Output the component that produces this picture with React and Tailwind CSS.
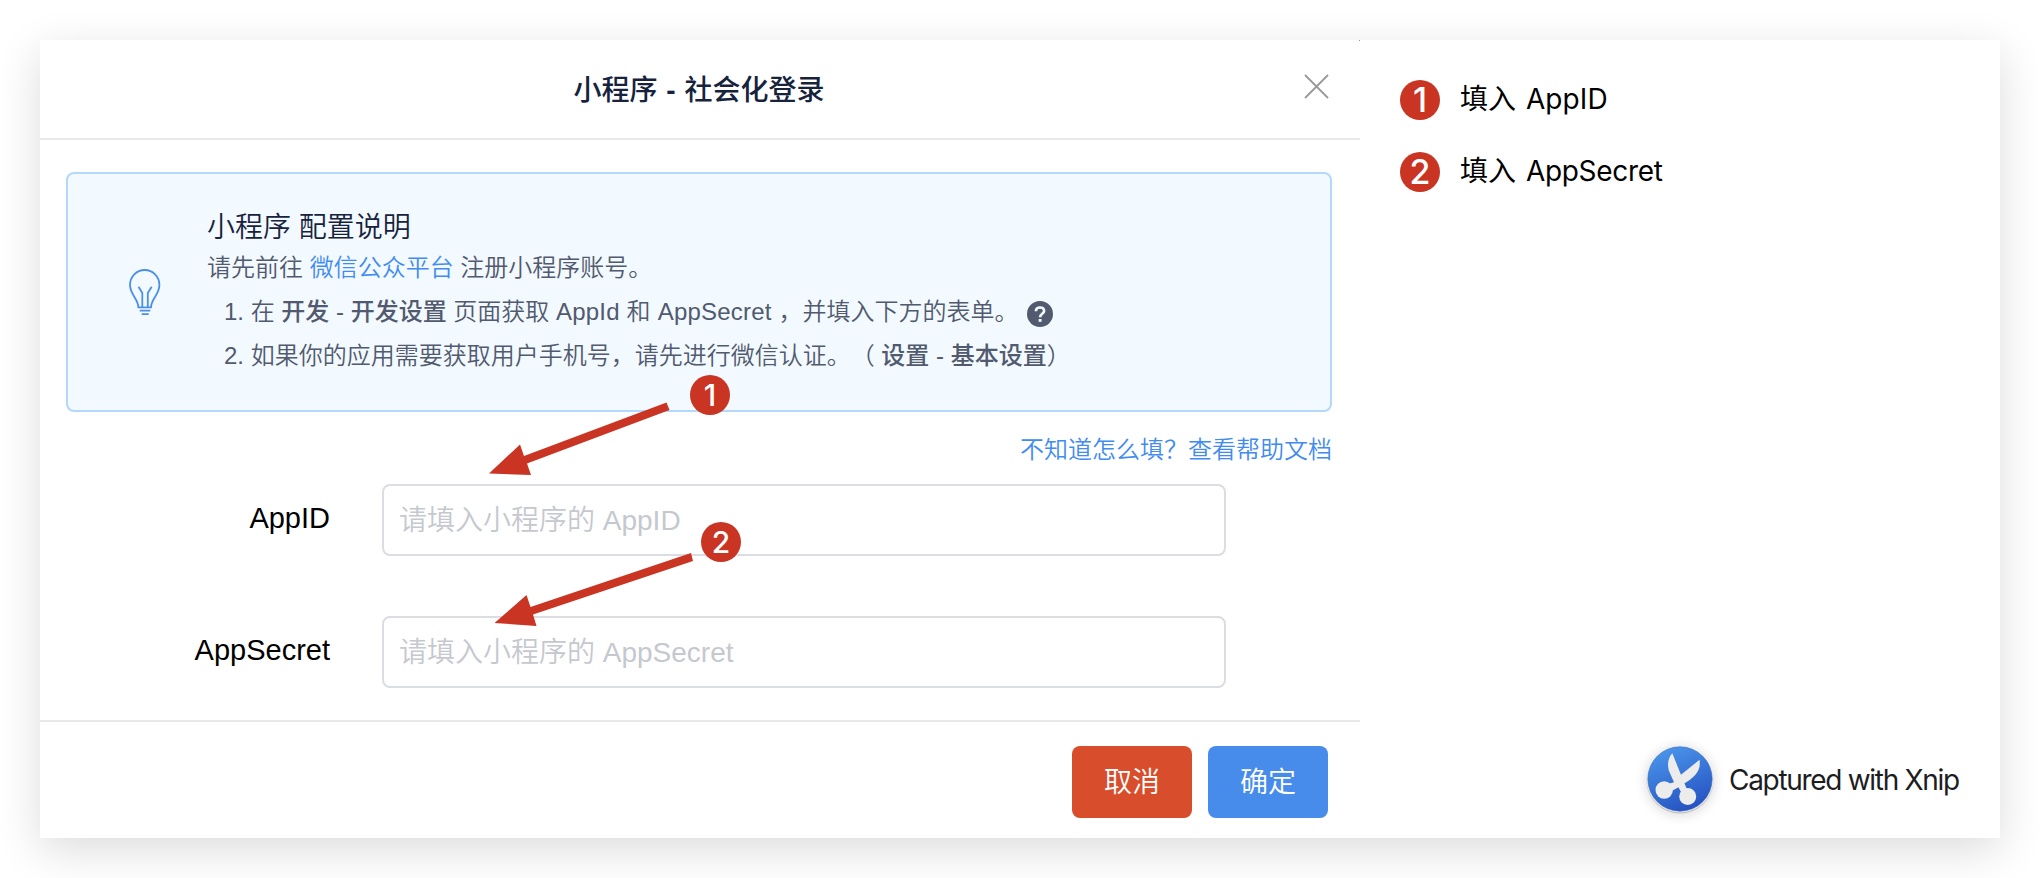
const BODY_FONT = "font-['Liberation_Sans','Noto_Sans_CJK_SC',sans-serif]";

function Badge({ n, className = "text-[30px]" }) {
  return (
    <span className={`flex size-10 shrink-0 items-center justify-center rounded-full bg-[#c93423] font-['Inter','Liberation_Sans',sans-serif] leading-none font-medium text-white ${className}`}>
      {n}
    </span>
  );
}

function Bulb() {
  return (
    <svg width="32" height="47" viewBox="0 0 32 47" fill="none" stroke="#4a90ea" strokeWidth="1.8">
      <path d="M9.400 38.300C9.400 30 1 25.500 1 16a14.700 15 0 0 1 29.400 0C30.400 25.500 22 30 22 38.300Z" />
      <path d="M9.500 17.700 13.300 24v14M22.700 17.700 18.800 24v14" />
      <path d="M10.700 41.600h10.600M12.700 45.200h7" />
    </svg>
  );
}

function Help() {
  return (
    <span className="mt-[3px] ml-[9px] flex size-[26px] items-center justify-center rounded-full bg-[#515a6e]">
      <svg width="26" height="26" viewBox="0 0 26 26" fill="none" stroke="#f2f9ff" strokeWidth="2.7">
        <path d="M8.900 10.200C9 7.600 10.800 6.500 13 6.500c2.500 0 4.100 1.400 4.100 3.400 0 2.900-4 2.900-4 6.300" />
        <path d="M13.100 18v2.800" strokeWidth="2.900" />
      </svg>
    </span>
  );
}

function Scissors() {
  return (
    <svg className="mt-px" width="90" height="90" viewBox="0 0 90 90">
      <defs>
        <linearGradient id="disc" x1="0.3" y1="0" x2="0.7" y2="1">
          <stop offset="0" stopColor="#4a95ea" />
          <stop offset="1" stopColor="#2450c0" />
        </linearGradient>
        <filter id="soft" x="-30%" y="-30%" width="160%" height="160%">
          <feGaussianBlur stdDeviation="6" />
        </filter>
      </defs>
      <circle cx="45" cy="47" r="35" fill="#000" opacity="0.13" filter="url(#soft)" />
      <circle cx="45" cy="46" r="33.6" fill="#c4c4c6" />
      <circle cx="45" cy="44.700" r="33.600" fill="#f1f1f2" />
      <circle cx="45" cy="45" r="32.200" fill="url(#disc)" stroke="#3d6db5" strokeWidth="0.6" />
      <g fill="#ececec">
        <path d="M37.300 19.300C33.500 23.500 32 29.500 33.800 36.500L39 48.300 33 50 37.500 56.500 43.500 53.300 46 58 52 55.500 49.500 49.300C58.500 44 66.500 37.500 64.500 25.800L46 40.800Z" />
        <circle cx="29.200" cy="56" r="8.700" />
        <circle cx="52.700" cy="62.400" r="8.500" />
      </g>
    </svg>
  );
}

function Field({ label, placeholder }) {
  return (
    <div className="flex h-[72px] items-center">
      <label className="w-[290px] pb-1 text-right text-[29px] leading-9 text-black">{label}</label>
      <div className="ml-[52px] flex h-[72px] w-[844px] items-center rounded-lg border-2 border-[#dcdde2] bg-white pt-0.5 pl-[15px] text-[28px] font-[350] text-[#c5c8ce]">
        {placeholder}
      </div>
    </div>
  );
}

export default function App() {
  return (
    <div className={`relative h-[878px] w-[2040px] overflow-hidden bg-white p-10 [text-spacing-trim:space-all] ${BODY_FONT}`}>
      <div className="flex h-[798px] w-[1960px] bg-white shadow-[0_12px_42px_rgba(0,0,0,0.14)]">
        <section className="flex w-[1320px] flex-col">
          <header className="flex h-[100px] shrink-0 items-center border-b-2 border-[#e8e8e8]">
            <h1 className="flex-1 pt-1 pr-0.5 text-center text-[28px] font-medium text-[#17233d]">
              小程序 <b className="mx-px font-bold">-</b> 社会化登录
            </h1>
            <svg className="absolute top-[74px] left-[1304px]" width="25" height="25" viewBox="0 0 25 25" stroke="#999" strokeWidth="1.8">
              <path d="M1 1 24 24M24 1 1 24" />
            </svg>
          </header>

          <main className="flex h-[580px] flex-col pt-8">
            <div className="mr-7 ml-[26px] flex h-[240px] rounded-lg border-2 border-[#b3d8fb] bg-[#f2f9ff]">
              <div className="flex w-[139px] items-center pl-[61px]">
                <Bulb />
              </div>
              <div className="pt-8 text-[24px] font-[350] text-[#515a6e]">
                <h2 className="text-[28px] leading-[44px] text-[#17233d]">小程序 配置说明</h2>
                <p className="-mt-0.5 mb-0.5 leading-[40px]">
                  请先前往 <a className="text-[#428bf0]">微信公众平台</a> 注册小程序账号。
                </p>
                <ol className="pl-[17px] leading-[44px]">
                  <li className="flex h-[44px] items-center whitespace-pre">
                    <span>1. 在 <b className="font-medium">开发</b> - <b className="font-medium">开发设置</b> 页面获取 <span className="tracking-[0.2px]">AppId 和 AppSecret </span>，并填入下方的表单。</span>
                    <Help />
                  </li>
                  <li className="h-[44px] whitespace-pre">
                    2. 如果你的应用需要获取用户手机号，请先进行微信认证。（ <b className="font-medium">设置</b> - <b className="font-medium">基本设置</b>）
                  </li>
                </ol>
              </div>
            </div>
            <a className="mt-5 mr-7 block text-right text-[24px] leading-9 font-[350] text-[#428bf0]">不知道怎么填？查看帮助文档</a>
            <div className="mt-4 flex flex-col gap-[60px]">
              <Field label="AppID" placeholder="请填入小程序的 AppID" />
              <Field label="AppSecret" placeholder="请填入小程序的 AppSecret" />
            </div>
          </main>

          <footer className="flex h-[118px] justify-end gap-4 border-t-2 border-[#e8e8e8] pt-6 pr-8 text-[28px] font-[350] text-white">
            <button className="h-[72px] w-[120px] rounded-lg bg-[#d84e2c] pt-0.5">取消</button>
            <button className="h-[72px] w-[120px] rounded-lg bg-[#488ceb] pt-0.5">确定</button>
          </footer>
        </section>

        <aside className="flex w-[640px] flex-col justify-between pt-10 pl-10 font-['Inter','Noto_Sans_CJK_SC',sans-serif]">
          <ol className="flex flex-col gap-8 text-[28px] leading-[38px] text-black">
            <li className="flex h-10 gap-5"><Badge n="1" className="text-[34px]" /><span>填入 <span className="ml-0.5 tracking-[0.1px]">AppID</span></span></li>
            <li className="flex h-10 gap-5"><Badge n="2" className="text-[34px]" /><span>填入 <span className="ml-0.5 tracking-[-0.3px]">AppSecret</span></span></li>
          </ol>
          <div className="mb-[14px] ml-[235px] flex items-center text-[28px] text-[#1d1d1f]">
            <Scissors />
            <span className="ml-1 pt-0.5 tracking-[-1.3px]">Captured with Xnip</span>
          </div>
        </aside>
      </div>

      <span className="absolute top-10 left-[1359px] size-px bg-[#999]" />
      <svg className="absolute top-0 left-0" width="800" height="700" viewBox="0 0 800 700" fill="#c93423">
        <path d="M489 473.500 520 444.500 524 456 666.500 402.500 669.500 410 527 463.500 531 475Z" />
        <path d="M494.500 623 526.500 595 530.500 607 691 553 693 561 533 614.500 536.500 626Z" />
      </svg>
      <Badge n="1" className="absolute top-[375px] left-[690px] text-[30px]" />
      <Badge n="2" className="absolute top-[522px] left-[701px] text-[30px]" />
    </div>
  );
}
